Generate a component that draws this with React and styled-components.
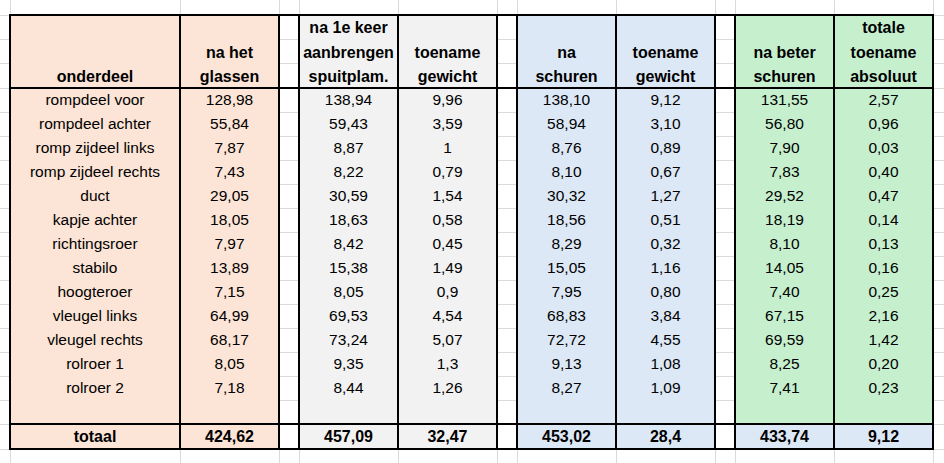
import React from 'react';
import styled, { createGlobalStyle } from 'styled-components';

const GRID = '#dadada';
const INK = '#000';

const FILL = {
  peach: '#fce4d6',
  gray: '#f2f2f2',
  blue: '#dde8f6',
  green: '#c6efce',
};

// sheet columns: left sliver, 8 value columns with 3 narrow blank ones, right sliver
const COLS = [10, 170, 99, 20, 99, 99, 20, 99, 99, 20, 99, 99, 11];

const HEADERS = [
  ['onderdeel'],
  ['na het', 'glassen'],
  ['na 1e keer', 'aanbrengen', 'spuitplam.'],
  ['toename', 'gewicht'],
  ['na', 'schuren'],
  ['toename', 'gewicht'],
  ['na beter', 'schuren'],
  ['totale', 'toename', 'absoluut'],
];

const COL_FILLS = ['peach', 'peach', 'gray', 'gray', 'blue', 'blue', 'green', 'green'];
const TOTAL_FILLS = ['peach', 'peach', 'gray', 'gray', 'blue', 'blue', 'blue', 'blue'];

const ROWS = [
  ['rompdeel voor', '128,98', '138,94', '9,96', '138,10', '9,12', '131,55', '2,57'],
  ['rompdeel achter', '55,84', '59,43', '3,59', '58,94', '3,10', '56,80', '0,96'],
  ['romp zijdeel links', '7,87', '8,87', '1', '8,76', '0,89', '7,90', '0,03'],
  ['romp zijdeel rechts', '7,43', '8,22', '0,79', '8,10', '0,67', '7,83', '0,40'],
  ['duct', '29,05', '30,59', '1,54', '30,32', '1,27', '29,52', '0,47'],
  ['kapje achter', '18,05', '18,63', '0,58', '18,56', '0,51', '18,19', '0,14'],
  ['richtingsroer', '7,97', '8,42', '0,45', '8,29', '0,32', '8,10', '0,13'],
  ['stabilo', '13,89', '15,38', '1,49', '15,05', '1,16', '14,05', '0,16'],
  ['hoogteroer', '7,15', '8,05', '0,9', '7,95', '0,80', '7,40', '0,25'],
  ['vleugel links', '64,99', '69,53', '4,54', '68,83', '3,84', '67,15', '2,16'],
  ['vleugel rechts', '68,17', '73,24', '5,07', '72,72', '4,55', '69,59', '1,42'],
  ['rolroer 1', '8,05', '9,35', '1,3', '9,13', '1,08', '8,25', '0,20'],
  ['rolroer 2', '7,18', '8,44', '1,26', '8,27', '1,09', '7,41', '0,23'],
  ['', '', '', '', '', '', '', ''],
];

const TOTALS = ['totaal', '424,62', '457,09', '32,47', '453,02', '28,4', '433,74', '9,12'];

const Global = createGlobalStyle`
  html, body {
    margin: 0;
    background: #fff;
    overflow: hidden;
  }
`;

const Sheet = styled.table`
  border-collapse: collapse;
  table-layout: fixed;
  width: 944px;
  font-family: 'Liberation Sans', Arial, sans-serif;
  font-size: 15.5px;
  color: ${INK};
`;

const Col = styled.col`
  width: ${(p) => p.$w}px;
`;

const Row = styled.tr`
  height: ${(p) => p.$h}px;
`;

const GridCell = styled.td`
  padding: 0;
  border: none;
  border-right: 1px solid ${GRID};
  border-bottom: 1px solid ${GRID};
`;

const Spacer = styled.td`
  padding: 0;
  background: #fff;
  border-left: 2px solid ${INK};
  border-right: 2px solid ${INK};
  border-top: ${(p) => (p.$top ? `2px solid ${INK}` : `1px solid ${GRID}`)};
  border-bottom: ${(p) => (p.$bottom ? `2px solid ${INK}` : `1px solid ${GRID}`)};
`;

const HeadCell = styled.th`
  padding: 0;
  vertical-align: top;
  text-align: center;
  font-weight: bold;
  font-size: 16px;
  white-space: nowrap;
  background: ${(p) => FILL[p.$fill]};
  border: 2px solid ${INK};
`;

const HeadStack = styled.div`
  box-sizing: border-box;
  height: 71px;
  padding-top: ${(p) => (3 - p.$n) * 24.5}px;
`;

const HeadLine = styled.div`
  line-height: 24.5px;
`;

const DataCell = styled.td`
  padding: 0;
  text-align: center;
  white-space: nowrap;
  overflow: hidden;
  line-height: 22px;
  background: ${(p) => FILL[p.$fill]};
  border-left: 2px solid ${INK};
  border-right: 2px solid ${INK};
  border-top: 1px solid ${(p) => FILL[p.$fill]};
  border-bottom: 1px solid ${(p) => FILL[p.$fill]};
`;

const TotalCell = styled.td`
  padding: 0;
  text-align: center;
  white-space: nowrap;
  line-height: 22px;
  font-weight: bold;
  font-size: 16px;
  background: ${(p) => FILL[p.$fill]};
  border: 2px solid ${INK};
`;

// put the narrow blank columns after value columns 1, 3 and 5
const withSpacers = (cells, spacer) =>
  cells.flatMap((cell, i) => (i === 1 || i === 3 || i === 5 ? [cell, spacer(i)] : [cell]));

export default function App() {
  return (
    <>
      <Global />
      <Sheet>
        <colgroup>
          {COLS.map((w, i) => (
            <Col key={i} $w={w} />
          ))}
        </colgroup>
        <tbody>
          <Row $h={15}>
            {COLS.map((_, i) => (
              <GridCell key={i} />
            ))}
          </Row>

          <Row $h={24}>
            <GridCell />
            {withSpacers(
              HEADERS.map((lines, i) => (
                <HeadCell key={i} rowSpan={3} $fill={COL_FILLS[i]}>
                  <HeadStack $n={lines.length}>
                    {lines.map((l) => (
                      <HeadLine key={l}>{l}</HeadLine>
                    ))}
                  </HeadStack>
                </HeadCell>
              )),
              (i) => <Spacer key={'s' + i} $top />
            )}
            <GridCell />
          </Row>
          <Row $h={24}>
            <GridCell />
            {[1, 3, 5].map((i) => (
              <Spacer key={i} />
            ))}
            <GridCell />
          </Row>
          <Row $h={25}>
            <GridCell />
            {[1, 3, 5].map((i) => (
              <Spacer key={i} $bottom />
            ))}
            <GridCell />
          </Row>

          {ROWS.map((row, r) => (
            <Row key={r} $h={24}>
              <GridCell />
              {withSpacers(
                row.map((v, i) => (
                  <DataCell key={i} $fill={COL_FILLS[i]}>
                    {v}
                  </DataCell>
                )),
                (i) => <Spacer key={'s' + i} $bottom={r === ROWS.length - 1} />
              )}
              <GridCell />
            </Row>
          ))}

          <Row $h={25}>
            <GridCell />
            {withSpacers(
              TOTALS.map((v, i) => (
                <TotalCell key={i} $fill={TOTAL_FILLS[i]}>
                  {v}
                </TotalCell>
              )),
              (i) => <Spacer key={'s' + i} $top $bottom />
            )}
            <GridCell />
          </Row>

          <Row $h={14}>
            {COLS.map((_, i) => (
              <GridCell key={i} />
            ))}
          </Row>
        </tbody>
      </Sheet>
    </>
  );
}
